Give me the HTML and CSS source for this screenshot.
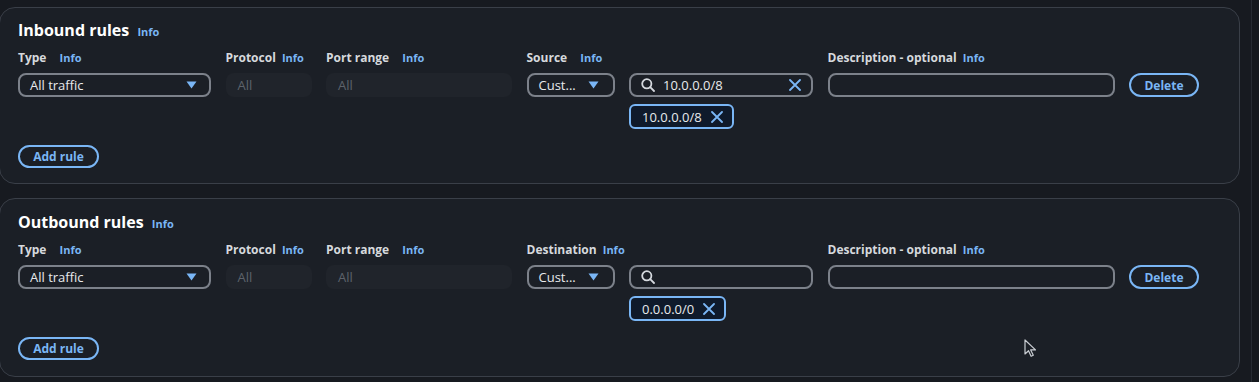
FILE: index.html
```html
<!DOCTYPE html>
<html>
<head>
    <meta charset="UTF-8">
    <title>Security group rules</title>
    <link rel="stylesheet" href="styles.css">
</head>
<body>
    <div class="page">
        <div class="main">
            <section class="card">
                <h2 class="card-title">Inbound rules <a class="info">Info</a></h2>
                <div class="rules">
                    <div class="field-label">Type <a class="info info-wide">Info</a></div>
                    <div class="field-label">Protocol <a class="info">Info</a></div>
                    <div class="field-label">Port range <a class="info info-wide">Info</a></div>
                    <div class="field-label">Source <a class="info info-wide">Info</a></div>
                    <div></div>
                    <div class="field-label">Description - optional <a class="info">Info</a></div>
                    <div></div>

                    <div class="select">
                        <span>All traffic</span>
                        <svg class="caret" width="11" height="8" viewBox="0 0 11 8"><path d="M0.5 0.5h10L5.5 7.5z" fill="#7ab6f5"/></svg>
                    </div>
                    <div class="disabled">All</div>
                    <div class="disabled">All</div>
                    <div class="select select-short">
                        <span>Cust...</span>
                        <svg class="caret" width="11" height="8" viewBox="0 0 11 8"><path d="M0.5 0.5h10L5.5 7.5z" fill="#7ab6f5"/></svg>
                    </div>
                    <div class="search">
                        <svg class="search-icon" width="14" height="14" viewBox="0 0 14 14"><circle cx="5.8" cy="5.8" r="4.6" fill="none" stroke="#d5d9de" stroke-width="1.8"/><path d="M9.2 9.2l3.8 3.8" stroke="#d5d9de" stroke-width="1.8" stroke-linecap="round"/></svg>
                        <span class="search-text">10.0.0.0/8</span>
                        <svg class="clear" width="12" height="12" viewBox="0 0 12 12"><path d="M1 1l10 10M11 1L1 11" stroke="#7ab6f5" stroke-width="1.8" stroke-linecap="round"/></svg>
                    </div>
                    <div class="text-input"></div>
                    <button class="btn">Delete</button>

                    <div class="token-cell">
                        <span class="token">10.0.0.0/8
                            <svg width="12" height="12" viewBox="0 0 12 12"><path d="M1 1l10 10M11 1L1 11" stroke="#7ab6f5" stroke-width="1.8" stroke-linecap="round"/></svg>
                        </span>
                    </div>
                </div>
                <button class="btn btn-add">Add rule</button>
            </section>

            <section class="card">
                <h2 class="card-title">Outbound rules <a class="info">Info</a></h2>
                <div class="rules">
                    <div class="field-label">Type <a class="info info-wide">Info</a></div>
                    <div class="field-label">Protocol <a class="info">Info</a></div>
                    <div class="field-label">Port range <a class="info info-wide">Info</a></div>
                    <div class="field-label">Destination <a class="info">Info</a></div>
                    <div></div>
                    <div class="field-label">Description - optional <a class="info">Info</a></div>
                    <div></div>

                    <div class="select">
                        <span>All traffic</span>
                        <svg class="caret" width="11" height="8" viewBox="0 0 11 8"><path d="M0.5 0.5h10L5.5 7.5z" fill="#7ab6f5"/></svg>
                    </div>
                    <div class="disabled">All</div>
                    <div class="disabled">All</div>
                    <div class="select select-short">
                        <span>Cust...</span>
                        <svg class="caret" width="11" height="8" viewBox="0 0 11 8"><path d="M0.5 0.5h10L5.5 7.5z" fill="#7ab6f5"/></svg>
                    </div>
                    <div class="search">
                        <svg class="search-icon" width="14" height="14" viewBox="0 0 14 14"><circle cx="5.8" cy="5.8" r="4.6" fill="none" stroke="#d5d9de" stroke-width="1.8"/><path d="M9.2 9.2l3.8 3.8" stroke="#d5d9de" stroke-width="1.8" stroke-linecap="round"/></svg>
                        <span class="search-text"></span>
                    </div>
                    <div class="text-input"></div>
                    <button class="btn">Delete</button>

                    <div class="token-cell">
                        <span class="token">0.0.0.0/0
                            <svg width="12" height="12" viewBox="0 0 12 12"><path d="M1 1l10 10M11 1L1 11" stroke="#7ab6f5" stroke-width="1.8" stroke-linecap="round"/></svg>
                        </span>
                    </div>
                </div>
                <button class="btn btn-add">Add rule</button>

                <svg class="cursor" width="12" height="18" viewBox="0 0 12 18"><path d="M1 1v14l3.5-3.3 2.6 5.6 2.2-1-2.6-5.4h4.8z" fill="#1b1f26" stroke="#c9cdd2" stroke-width="1.2" stroke-linejoin="round"/></svg>
            </section>
        </div>
        <div class="scrollbar"></div>
    </div>
</body>
</html>
```

FILE: styles.css
```css
:root {
    --page-bg: #171a20;
    --card-bg: #1b1f26;
    --card-border: #3a3f48;
    --input-border: #7c818a;
    --blue: #7ab6f5;
    --text: #e8eaed;
    --label: #d6d9dd;
    --muted: #5d636c;
}

body {
    margin: 0;
    background: var(--page-bg);
    font-family: 'Open Sans', 'Noto Sans', sans-serif;
    color: var(--text);
}

.page {
    display: flex;
    height: 382px;
    overflow: hidden;
}

.main {
    flex: 1;
    padding: 7px 11px 0 0;
    margin-left: -1px;
    display: flex;
    flex-direction: column;
    gap: 14px;
}

.scrollbar {
    width: 7px;
    background: #15181d;
    border-left: 1px solid #262a31;
}

.card {
    position: relative;
    background: var(--card-bg);
    border: 1px solid var(--card-border);
    border-radius: 16px;
    padding: 11px 17px 15px 18px;
}

.card + .card {
    padding-top: 12px;
    padding-bottom: 16px;
}

.card-title {
    margin: 0;
    font-size: 16px;
    line-height: 22px;
    font-weight: 700;
    color: #ffffff;
}

.info {
    font-size: 11px;
    line-height: 1;
    font-weight: 700;
    color: var(--blue);
    margin-left: 3px;
}

.card-title .info {
    margin-left: 4px;
}

.info-wide {
    margin-left: 10px;
}

.rules {
    display: grid;
    grid-template-columns: 193px 86px 186px 88px 184px 287px 70px;
    column-gap: 14.5px;
    row-gap: 7px;
    margin-top: 9px;
}

.field-label {
    font-size: 12px;
    line-height: 16px;
    font-weight: 700;
    color: var(--label);
    white-space: nowrap;
}

.select,
.search,
.text-input {
    box-sizing: border-box;
    height: 24px;
    border: 2px solid var(--input-border);
    border-radius: 8px;
    display: flex;
    align-items: center;
    font-size: 13px;
}

.select {
    justify-content: space-between;
    padding: 0 12px 0 10px;
}

.select-short {
    padding-right: 14px;
}

.disabled {
    height: 24px;
    border-radius: 8px;
    background: #20242b;
    color: var(--muted);
    font-size: 13px;
    line-height: 24px;
    padding-left: 12px;
}

.search {
    padding: 0 10px;
    gap: 8px;
}

.search-text {
    flex: 1;
}

.btn {
    box-sizing: border-box;
    height: 24px;
    border: 2px solid var(--blue);
    border-radius: 20px;
    background: transparent;
    color: var(--blue);
    font-family: inherit;
    font-size: 12px;
    font-weight: 700;
    padding: 0;
}

.btn-add {
    display: block;
    width: 81px;
    height: 23px;
    margin-top: 16px;
}

.token-cell {
    grid-column: 5;
}

.token {
    box-sizing: border-box;
    display: inline-flex;
    align-items: center;
    gap: 9px;
    height: 25px;
    padding: 0 9px 0 11px;
    border: 2px solid var(--blue);
    border-radius: 6px;
    background: #0f1a2b;
    font-size: 13px;
}

.cursor {
    position: absolute;
    left: 1024px;
    top: 140px;
}
```
